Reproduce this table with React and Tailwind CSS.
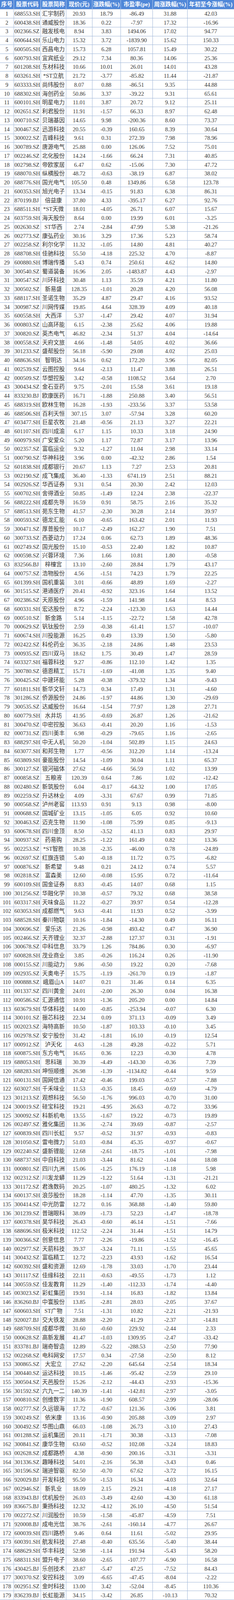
import React from 'react';

const raw = `688553.SH 汇宇制药 20.93 18.79 -86.49 31.88 42.03
600438.SH 通威股份 18.36 0.22 -7.97 17.32 -16.96
002366.SZ 融发核电 8.94 3.83 1494.06 17.02 94.77
600644.SH 乐山电力 15.32 3.72 -1839.90 15.62 150.33
600505.SH 西昌电力 15.73 6.28 1057.81 15.49 30.22
600793.SH 宜宾纸业 29.12 7.34 80.36 14.06 25.36
601208.SH 东材科技 10.66 10.01 26.01 14.01 43.28
603261.SH *ST立航 21.72 -3.77 -85.82 11.44 -21.87
603333.SH 尚纬股份 8.07 0.88 -86.51 9.35 44.88
688302.SH 海创药业 50.86 3.37 -39.22 9.31 65.61
600101.SH 明星电力 11.01 3.87 20.72 9.12 25.11
002651.SZ 利君股份 11.91 -1.57 66.33 8.97 62.48
000710.SZ 贝瑞基因 14.65 9.98 -200.36 8.60 73.37
300467.SZ 迅游科技 20.55 -0.39 160.65 8.39 30.64
300022.SZ 吉峰科技 9.61 0.31 272.39 7.98 78.96
300789.SZ 唐源电气 25.88 0.00 126.06 7.52 75.01
002246.SZ 北化股份 14.24 -1.66 66.24 7.31 40.85
002798.SZ 帝欧家居 6.47 0.62 -15.06 7.30 47.72
688070.SH 纵横股份 48.72 -0.63 -38.19 6.87 38.02
688776.SH 国光电气 105.50 0.48 1349.86 6.58 123.78
600353.SH 旭光电子 13.34 -0.15 91.83 6.38 86.31
870199.BJ 倍益康 37.80 4.33 -395.17 6.27 92.76
688511.SH *ST天微 18.01 -4.05 26.71 6.07 15.67
603759.SH 海天股份 8.64 0.00 19.99 6.01 -3.25
002630.SZ ST华西 2.74 -2.84 47.99 5.38 -21.26
002773.SZ 康弘药业 30.16 3.29 17.36 5.23 58.74
002258.SZ 利尔化学 11.32 -1.05 14.80 4.81 40.27
688708.SH 佳驰科技 55.50 -4.18 225.32 4.70 -8.87
600880.SH 博瑞传播 5.43 0.74 250.61 4.62 14.80
300540.SZ 蜀道装备 16.96 2.05 -1483.87 4.43 -2.97
300547.SZ 川环科技 30.48 1.13 35.59 4.21 11.80
300502.SZ 新易盛 128.35 -1.01 20.28 4.20 56.08
688117.SH 圣诺生物 35.29 4.87 29.47 4.16 93.52
300987.SZ 川网传媒 19.85 4.64 328.39 4.09 40.18
600558.SH 大西洋 5.37 -1.47 29.42 4.07 31.94
000803.SZ 山高环能 6.15 -2.38 25.62 4.06 19.88
300820.SZ 英杰电气 46.82 -2.34 51.37 4.04 -14.64
000558.SZ 天府文旅 4.66 -1.48 54.05 4.02 36.66
301233.SZ 盛帮股份 56.18 -5.90 29.08 4.02 25.03
688636.SH 智明达 34.16 0.62 172.20 3.96 82.05
002539.SZ 云图控股 9.64 -2.13 11.47 3.88 26.51
000509.SZ 华塑控股 3.42 -0.58 1108.52 3.64 2.70
300434.SZ 金石亚药 9.75 -2.01 15.58 3.61 19.18
833230.BJ 欧康医药 16.71 -1.88 250.88 3.40 56.51
688319.SH 欧林生物 16.28 -1.93 -233.56 3.37 53.58
688506.SH 百利天恒 307.15 3.07 -57.94 3.28 60.20
603477.SH 巨星农牧 21.48 -0.56 21.13 3.27 22.21
601107.SH 四川成渝 6.17 1.15 10.33 3.18 24.90
600979.SH 广安爱众 5.20 1.17 72.87 3.17 13.96
002357.SZ 富临运业 9.32 -1.27 11.04 2.98 33.14
000790.SZ 华神科技 3.96 0.00 -42.32 2.86 1.54
601838.SH 成都银行 20.67 1.13 7.27 2.53 20.81
002190.SZ 成飞集成 36.40 -1.33 6741.19 2.51 88.21
002926.SZ 华西证券 9.31 0.54 20.30 2.42 12.03
600702.SH 舍得酒业 50.85 -1.49 12.24 2.38 -22.37
688222.SH 成都先导 16.59 0.91 58.75 2.16 35.32
688513.SH 苑东生物 41.57 -2.30 30.28 2.14 39.97
000593.SZ 德龙汇能 6.10 -0.65 163.42 2.01 11.93
300471.SZ 厚普股份 10.17 -2.49 162.27 1.90 7.51
300733.SZ 西菱动力 17.24 0.06 62.73 1.89 48.36
002749.SZ 国光股份 15.10 -0.53 22.40 1.82 10.87
000598.SZ 兴蓉环境 7.36 1.66 10.81 1.80 -0.58
832566.BJ 梓橦宫 13.10 -2.60 28.84 1.79 43.17
000757.SZ 浩物股份 4.56 -1.51 74.23 1.79 22.25
601399.SH 国机重装 3.01 -0.66 48.89 1.69 -2.27
301515.SZ 港通医疗 20.41 -0.92 323.16 1.64 13.52
002386.SZ 天原股份 4.96 -1.59 141.98 1.64 8.53
600331.SH 宏达股份 8.72 -2.24 -123.30 1.63 14.44
000510.SZ 新金路 5.14 -1.15 -22.72 1.58 42.78
000629.SZ 钒钛股份 2.59 -0.38 -61.41 1.57 -10.07
600674.SH 川投能源 16.25 0.49 13.39 1.50 -5.80
002422.SZ 科伦药业 36.35 -2.18 24.86 1.48 23.53
000935.SZ 四川双马 18.62 1.75 30.49 1.47 28.59
603327.SH 福蓉科技 9.27 -0.86 112.10 1.42 1.35
300780.SZ 德恩精工 15.71 -1.69 -41.08 1.35 9.40
300425.SZ 中建环能 5.28 -0.38 -379.32 1.34 -9.43
601811.SH 新华文轩 14.73 0.34 17.49 1.31 -4.60
301286.SZ 侨源股份 24.86 -1.97 44.86 1.30 -29.69
300535.SZ 达威股份 16.64 -1.54 77.97 1.28 27.71
600779.SH 水井坊 41.95 -0.69 26.87 1.26 -21.62
300470.SZ 中密控股 36.63 -0.41 20.20 1.16 -1.53
000731.SZ 四川美丰 6.98 -0.29 -79.65 1.16 -2.65
688297.SH 中无人机 50.20 -1.04 502.89 1.15 24.63
603077.SH 和邦生物 1.77 -0.56 312.20 1.14 -13.24
603809.SH 豪能股份 14.54 -1.09 30.04 1.11 65.37
300127.SZ 银河磁体 27.62 -4.66 56.59 1.02 13.99
000858.SZ 五粮液 120.39 0.64 7.86 1.02 -12.42
002480.SZ 新筑股份 6.04 -0.17 -64.32 1.00 17.05
002259.SZ 升达林业 4.09 -3.31 67.67 0.99 71.85
000568.SZ 泸州老窖 113.93 0.91 9.13 0.98 -8.00
000688.SZ 国城矿业 13.15 -1.05 6.05 0.92 10.60
300463.SZ 迈克生物 11.90 -1.08 75.99 0.85 -9.13
600678.SH 四川金顶 8.50 -3.52 41.13 0.83 29.97
300937.SZ 药易购 28.25 -1.22 161.49 0.82 13.36
002253.SZ *ST智胜 10.38 -2.35 -46.00 0.78 -24.89
002697.SZ 红旗连锁 5.40 -0.18 11.72 0.75 -6.82
000876.SZ 新希望 9.48 0.21 24.12 0.74 5.57
002818.SZ 富森美 12.60 -0.08 15.95 0.72 -11.64
600109.SH 国金证券 8.83 -0.45 14.07 0.68 1.15
301256.SZ 华融化学 10.38 -0.57 79.32 0.68 38.58
603317.SH 天味食品 11.22 -0.27 39.97 0.54 -12.28
603053.SH 成都燃气 9.63 -0.41 11.93 0.52 -3.99
688528.SH 秦川物联 10.16 -1.84 -14.30 0.49 16.11
300696.SZ 爱乐达 21.26 -0.98 493.42 0.47 36.90
002466.SZ 天齐锂业 32.37 -2.88 127.37 0.31 -1.91
300678.SZ 中科信息 33.79 1.26 784.86 0.30 -6.97
600828.SH 茂业商业 3.85 -0.26 116.24 0.26 -11.90
000155.SZ 川能动力 9.86 -0.50 19.22 0.20 -7.68
002935.SZ 天奥电子 15.75 -1.19 -261.70 0.19 -1.87
000888.SZ 峨眉山A 14.07 0.21 31.46 0.14 6.35
001337.SZ 四川黄金 24.01 -2.00 26.30 0.04 16.38
000586.SZ 汇源通信 10.91 -1.36 205.20 0.00 14.84
603679.SH 华体科技 14.00 -0.85 -253.94 -0.07 6.30
300101.SZ 振芯科技 22.34 0.09 371.13 -0.09 3.49
002023.SZ 海特高新 10.50 -1.87 103.33 -0.10 3.45
002978.SZ 安宁股份 31.42 -1.81 16.10 -0.19 12.54
000912.SZ 泸天化 4.63 -1.28 49.28 -0.22 5.71
600875.SH 东方电气 16.65 0.36 12.23 -0.30 4.78
688053.SH 思科瑞 30.39 -4.49 -143.30 -0.36 7.39
688283.SH 坤恒顺维 26.98 -1.39 -1134.82 -0.44 9.59
600131.SH 国网信通 17.42 -0.46 199.03 -0.57 -7.88
603027.SH 千禾味业 11.53 -0.35 18.45 -0.69 -4.79
301213.SZ 观想科技 56.50 -1.76 996.03 -0.70 31.00
300019.SZ 硅宝科技 19.21 -4.95 26.63 -0.72 33.96
300092.SZ 科新机电 13.55 -1.67 19.22 -0.73 19.89
002497.SZ 雅化集团 11.36 -2.74 39.69 -0.87 -2.57
600839.SH 四川长虹 9.57 -0.52 31.97 -0.93 -0.83
301050.SZ 雷电微力 51.03 -0.84 45.35 -0.97 -0.67
002240.SZ 盛新锂能 12.68 -2.61 -18.75 -1.01 -7.98
688737.SH 中自科技 21.03 -3.44 81.62 -1.04 18.08
000801.SZ 四川九洲 15.06 -1.25 176.19 -1.18 5.98
002312.SZ 川发龙蟒 11.29 -1.22 51.64 -1.31 -21.21
301172.SZ 君逸数码 20.25 -1.07 480.25 -1.32 6.02
600137.SH 浪莎股份 18.28 -1.14 47.70 -1.35 30.11
300414.SZ 中光防雷 12.72 0.16 368.88 -1.40 59.80
301239.SZ 普瑞眼科 38.09 -1.73 52.23 -1.47 -18.78
600378.SH 昊华科技 26.43 -0.60 46.14 -1.51 -7.66
688696.SH 极米科技 112.52 -2.24 31.44 -1.51 14.79
300366.SZ 创意信息 7.77 -2.26 -19.86 -1.52 -16.45
002977.SZ 天箭科技 39.37 -3.24 71.11 -1.55 45.65
300432.SZ 富临精工 12.72 -2.23 43.93 -1.62 16.54
600392.SH 盛和资源 12.69 -1.78 33.03 -1.70 23.44
301117.SZ 佳缘科技 22.11 -0.63 -49.55 -1.73 1.12
300559.SZ 佳发教育 11.29 -1.40 -112.33 -1.74 -4.40
003023.SZ 彩虹集团 19.91 -1.14 16.83 -1.82 13.84
836260.BJ 中寰股份 13.85 -2.81 28.03 -2.05 37.67
600603.SH ST广物 7.51 -1.31 10.82 -2.21 -21.93
920027.BJ 交大铁发 28.88 -2.20 41.29 -2.37 -14.81
688709.SH 成都华微 31.60 -0.60 229.92 -2.44 2.33
000628.SZ 高新发展 41.47 -1.03 1309.95 -2.47 -33.42
833781.BJ 瑞奇智造 12.89 -5.22 -288.53 -2.50 77.90
002268.SZ 电科网安 17.57 0.34 -27.58 -2.50 8.12
300865.SZ 大宏立 27.62 -2.20 645.64 -2.54 18.34
300440.SZ 运达科技 10.15 -1.46 -95.42 -2.59 29.10
300504.SZ 天邑股份 15.26 -2.12 -44.43 -2.93 -15.36
301592.SZ 六九一二 140.39 -1.41 -142.81 -2.97 -3.05
000810.SZ 创维数字 11.36 -1.90 608.57 -2.99 -28.06
002777.SZ 久远银海 17.72 -0.67 121.36 -3.06 3.81
300249.SZ 依米康 13.16 -0.90 205.88 -3.09 2.97
300492.SZ 华图山鼎 66.03 -1.08 26.73 -3.10 27.43
001288.SZ 运机集团 20.11 -1.71 30.38 -3.13 -7.08
300841.SZ 康华生物 63.60 -0.52 102.08 -3.24 18.83
002628.SZ 成都路桥 4.38 -0.90 200.16 -3.31 -3.31
301336.SZ 趣睡科技 54.01 -2.16 56.38 -3.43 0.46
301596.SZ 瑞迪智驱 82.50 -0.70 67.62 -3.72 16.15
920029.BJ 开发科技 95.50 -1.53 16.34 -4.03 32.64
002946.SZ 新乳业 18.09 2.15 29.21 -4.18 27.17
833943.BJ 优机股份 26.03 -3.49 42.60 -4.30 61.18
836675.BJ 秉扬科技 12.32 -4.12 26.10 -4.50 51.54
002272.SZ 川润股份 10.59 -1.58 -45.87 -4.59 7.51
920008.BJ 成电光信 38.76 -2.61 -160.14 -4.77 26.67
600039.SH 四川路桥 9.46 0.64 11.61 -5.02 29.95
600391.SH 航发科技 27.48 -0.40 635.56 -5.40 38.44
688629.SH 华丰科技 52.98 -1.14 191.94 -5.43 58.20
688311.SH 盟升电子 38.60 -2.65 -107.77 -6.90 16.58
430425.BJ 乐创技术 23.87 -5.47 47.25 -7.52 84.43
300370.SZ 安控科技 3.09 -6.65 -47.45 -8.04 -2.22
002951.SZ 金时科技 13.00 3.42 -52.04 -8.45 110.36
836239.BJ 长虹能源 34.15 -3.42 26.85 -10.13 70.32`;

const rows = raw.split('\n').map((line) => line.trim().split(/\s+/));

const headers = ['序号', '股票代码', '股票简称', '现价(元)', '涨跌幅(%)', '市盈率(pe)', '周涨跌幅(%)', '年初至今涨幅(%)'];

const cell = 'flex items-center justify-center whitespace-nowrap overflow-hidden border-r border-b border-[#9fb6d8]';

export default function App() {
  // 表格铺满整个窗口高度：表头 26 份，每行 24.374 份
  return (
    <div className="grid grid-cols-[36px_69px_65px_66.5px_73.5px_82px_89px_119px] grid-rows-[26fr_repeat(179,24.374fr)] w-[600px] h-screen overflow-hidden bg-white text-[#333] text-[14.5px] leading-none font-['Liberation_Serif','Noto_Sans_CJK_SC',serif]">
      {headers.map((h, i) => (
        <div
          key={h}
          className={`flex items-center justify-center whitespace-nowrap bg-[#4f87d8] text-white font-bold border-b border-[#9fb6d8] ${i < headers.length - 1 ? 'border-r border-r-[#b9cdec]' : ''}`}
        >
          {h}
        </div>
      ))}

      {rows.map((r, idx) => (
        <div key={r[0]} className="contents">
          <div className={cell}>{idx + 1}</div>
          <div className="flex items-center pl-[1px] whitespace-nowrap overflow-hidden border-r border-b border-[#9fb6d8]">{r[0]}</div>
          <div className={cell}>{r[1]}</div>
          <div className={cell}>{r[2]}</div>
          <div className={cell}>{r[3]}</div>
          <div className={cell}>{r[4]}</div>
          <div className={cell}>{r[5]}</div>
          <div className="flex items-center justify-center whitespace-nowrap overflow-hidden border-b border-[#9fb6d8]">{r[6]}</div>
        </div>
      ))}
    </div>
  );
}
